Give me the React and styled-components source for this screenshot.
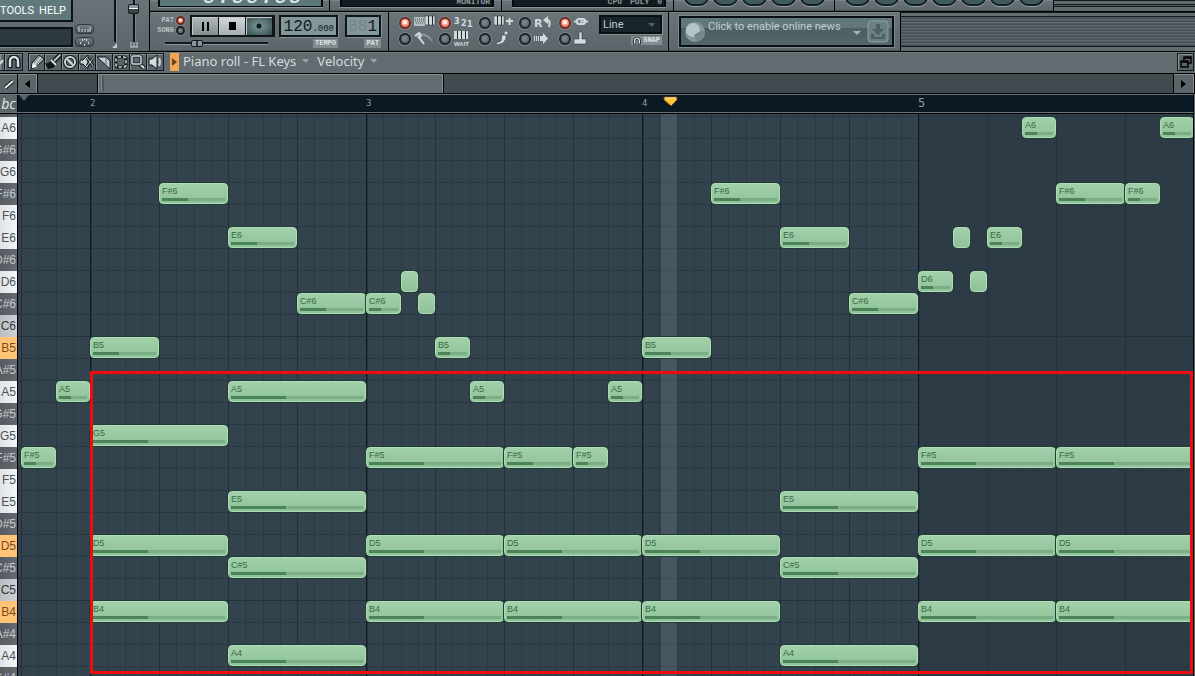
import styled, { createGlobalStyle, css } from 'styled-components'

const GlobalStyle = createGlobalStyle`
  * { box-sizing: border-box; }
  body {
    margin: 0;
    background: #5e686d;
    font-family: "Liberation Sans", Arial, sans-serif;
  }
  button, input, select { margin: 0; padding: 0; font: inherit; }
  button { border: 0; background: none; color: inherit; }
`

const STEP = 17.25
const ROW = 22
const GRID_START = 72

const Window = styled.div`
  display: flex;
  flex-direction: column;
  height: 100vh;
  overflow: hidden;
`

const TopArea = styled.header`
  display: flex;
  flex: none;
  height: 52px;
  border-bottom: 1px solid #000;
`

const stripes = css`
  background: repeating-linear-gradient(#606a6e 0 1px, #505a5e 1px 2px, #454f53 2px 3px);
`

const MainPanel = styled.div`
  display: flex;
  flex: none;
  width: 150px;
  border-right: 1px solid #000;
  background: linear-gradient(#697378, #5b656a);
`

const MenuColumn = styled.div`
  display: flex;
  flex-direction: column;
  gap: 5px;
  width: 73px;
`

const Menu = styled.nav`
  display: flex;
  justify-content: flex-end;
  align-items: center;
  gap: 5px;
  height: 22px;
  padding-right: 5px;
  border: 2px solid #0a1214;
  border-width: 0 2px 2px 0;
  background: #61797a;
`

const MenuItem = styled.a`
  color: #fff;
  font-family: Roboto, sans-serif;
  font-size: 11px;
  text-decoration: none;
`

const HintBar = styled.div`
  height: 20px;
  border: 2px solid #0a1214;
  border-left: 0;
  background: #2c3a3f;
  box-shadow: 0 1px #7d878b;
`

const SideButtons = styled.div`
  display: flex;
  flex-direction: column;
  justify-content: flex-end;
  gap: 3px;
  padding: 0 2px 4px;
`

const PillButton = styled.button`
  display: flex;
  align-items: center;
  justify-content: center;
  width: 19px;
  height: 10px;
  border: 1px solid #30393d;
  border-radius: 4px;
  background: linear-gradient(#758085, #434d52);
`

const Faders = styled.div`
  display: flex;
  gap: 8px;
  padding-left: 13px;
`

const FaderSlot = styled.div`
  display: flex;
  flex-direction: column;
  align-items: center;
  width: 11px;
`

const Fader = styled.input`
  appearance: none;
  writing-mode: vertical-lr;
  direction: rtl;
  width: 11px;
  height: 42px;
  background: linear-gradient(90deg, transparent 5px, #0c1316 5px 7px, #78848a 7px 8px, transparent 8px);
  &::-webkit-slider-thumb {
    appearance: none;
    width: 11px;
    height: 10px;
    border: 1px solid #161d20;
    border-radius: 2px;
    background: linear-gradient(#8c959a 35%, #fff 35% 50%, #3c4549 50%);
    visibility: ${({ $hidden }) => ($hidden ? 'hidden' : 'visible')};
  }
`

const Racks = styled.div`
  display: flex;
  flex: 1;
  flex-direction: column;
  min-width: 0;
`

const Rack = styled.div`
  display: flex;
  height: ${({ $h }) => $h}px;
  overflow: hidden;
  ${({ $line }) => $line && 'border-bottom: 1px solid #000;'}
`

const Panel = styled.section`
  display: flex;
  flex: none;
  align-items: flex-start;
  width: ${({ $w }) => $w}px;
  padding: ${({ $pad }) => $pad};
  border-right: 1px solid #000;
  background: linear-gradient(#697378, #5b656a);
  box-shadow: inset 0 1px #7b8589, inset 0 -1px #495357;
`

const EmptyRack = styled.div`
  flex: 1;
  ${stripes}
  border-top: 1px solid #14191b;
  box-shadow: inset 0 3px #626c70, inset 0 4px #14191b, inset 0 -4px #626c70, inset 0 -5px #14191b;
`

const CutDisplay = styled.div`
  display: flex;
  justify-content: flex-end;
  align-items: flex-end;
  gap: 8px;
  width: 100%;
  height: 7px;
  overflow: hidden;
  padding-right: ${({ $lcd }) => ($lcd ? 18 : 2)}px;
  border: 1px solid #050a0c;
  border-width: 0 2px 1px;
  background: ${({ $lcd }) => ($lcd ? '#5d7778' : '#111b20')};
  color: ${({ $lcd }) => ($lcd ? '#dfe9e9' : '#8f9a9e')};
  font: ${({ $lcd }) => ($lcd ? 'italic 24px/18px' : 'bold 8px/8px')} "Liberation Mono", monospace;
  box-shadow: 0 1px #8b9599;
`

const RoundButtons = styled.div`
  display: flex;
  align-items: flex-end;
  gap: 4px;
  height: 6px;
`

const RoundButton = styled.button`
  width: 25px;
  height: 20px;
  flex: none;
  border: 2px solid #151f23;
  border-radius: 9px;
  background: #405a5d;
  box-shadow: 0 1px #97a1a5;
`

const ModeSwitch = styled.fieldset`
  display: flex;
  flex-direction: column;
  width: 28px;
  margin: 0;
  padding: 0;
  border: 0;
`

const ModeLabel = styled.label`
  display: flex;
  align-items: center;
  justify-content: flex-end;
  gap: 2px;
  height: 10px;
  color: #bac3c7;
  font: bold 7px/10px "Liberation Mono", monospace;
`

const Led = styled.input`
  appearance: none;
  flex: none;
  width: ${({ $size }) => $size}px;
  height: ${({ $size }) => $size}px;
  border: 2px solid #1b2326;
  border-radius: 50%;
  background: radial-gradient(circle at 45% 40%, #7d878b, #565f63);
  box-shadow: 0 0 0 1px #79848a;
  &:checked {
    background: radial-gradient(circle at 50% 40%, #fff 15%, #ff8a78 55%, #e85844);
    border-color: #712920;
  }
`

const TransportButtons = styled.div`
  display: flex;
  margin-left: 5px;
  border: 2px solid #101618;
  background: #101618;
  gap: 1px;
`

const TransportButton = styled.button`
  display: flex;
  align-items: center;
  justify-content: center;
  width: 26px;
  height: 18px;
  background: ${({ $tone }) => $tone};
  box-shadow: inset 1px 1px #c2cacd;
`

const TransportGroup = styled.div`
  display: grid;
  grid-template-columns: 28px 90px;
  row-gap: 1px;
`

const Position = styled.input`
  appearance: none;
  grid-column: 1 / 3;
  width: 103px;
  height: 10px;
  margin-left: 8px;
  background: linear-gradient(transparent 4px, #11191c 4px 6px, #8a959a 6px 7px, transparent 7px);
  &::-webkit-slider-thumb {
    appearance: none;
    width: 12px;
    height: 7px;
    border: 1px solid #161d20;
    border-radius: 2px;
    background: linear-gradient(90deg, #8a959a 40%, #2c3438 40% 60%, #8a959a 60%);
  }
`

const Readout = styled.div`
  display: flex;
  flex-direction: column;
  align-items: flex-end;
  gap: 2px;
  width: ${({ $w }) => $w}px;
  margin-left: ${({ $gap }) => $gap}px;
`

const Lcd = styled.output`
  display: flex;
  align-items: baseline;
  justify-content: flex-end;
  width: 100%;
  height: 22px;
  padding-right: 2px;
  border: 2px solid #0e1517;
  background: #83979a;
  box-shadow: 1px 1px #879195;
  color: #10191c;
  font: 16px/20px "Liberation Mono", monospace;
  small { font-size: 9px; }
  s { color: #74888b; text-decoration: none; }
`

const Tag = styled.span`
  display: flex;
  align-items: center;
  gap: 2px;
  height: 9px;
  padding: 0 2px;
  background: #818b90;
  color: #dde3e5;
  font: bold 7px/9px "Liberation Mono", monospace;
`

const Options = styled.div`
  display: grid;
  grid-template-columns: repeat(5, 40px);
  grid-auto-rows: 16px;
`

const Option = styled.label`
  display: flex;
  align-items: center;
  gap: 3px;
`

const SnapGroup = styled.div`
  display: flex;
  flex-direction: column;
  align-items: flex-end;
  gap: 2px;
  margin-left: auto;
`

const SelectWrap = styled.div`
  display: grid;
  grid-template-columns: 1fr 12px;
  align-items: center;
  width: 63px;
  height: 19px;
  border: 2px solid #0a1012;
  background: #17242a;
  box-shadow: 1px 1px #879195;
  svg { grid-area: 1 / 2; pointer-events: none; }
`

const SnapSelect = styled.select`
  appearance: none;
  grid-area: 1 / 1 / 2 / 3;
  width: 100%;
  padding-left: 2px;
  border: 0;
  background: none;
  color: #c3cbce;
  font: 11px/14px Roboto, sans-serif;
`

const News = styled.button`
  display: flex;
  align-items: flex-start;
  gap: 2px;
  width: 215px;
  height: 31px;
  padding: 2px 3px 0 4px;
  border: 2px solid #0a1012;
  background: linear-gradient(#62777a 0 10px, #4b5f62 10px, #526769);
  box-shadow: 0 0 0 1px #7d898d;
  color: #c0cfd1;
  font: 11px/14px Roboto, sans-serif;
  span { flex: 1; text-align: left; white-space: nowrap; }
`

const TitleBar = styled.div`
  display: flex;
  flex: none;
  align-items: flex-start;
  height: 22px;
  padding: 1px 1px 0 0;
  border-bottom: 1px solid #000;
  background: #616b70;
  box-shadow: inset 0 1px #737d81;
  color: #d5dcdf;
  font: 13px/16px "Noto Sans", "Open Sans", sans-serif;
  white-space: nowrap;
`

const ToolGroup = styled.div`
  display: flex;
  margin-right: ${({ $after }) => $after}px;
`

const Tool = styled.button`
  display: flex;
  align-items: center;
  justify-content: center;
  width: ${({ $w }) => $w || 17}px;
  height: 18px;
  overflow: hidden;
  border: 1px solid #11181b;
  border-left-width: ${({ $joined }) => ($joined ? 0 : 1)}px;
  background: #596368;
  box-shadow: inset 1px 1px #879196;
`

const PlayMark = styled.button`
  display: flex;
  align-items: center;
  justify-content: center;
  width: 9px;
  height: 18px;
  margin-right: 4px;
  background: #f2a650;
`

const TitleItem = styled.button`
  display: flex;
  align-items: center;
  gap: 6px;
  margin-right: 8px;
`

const Spring = styled.div`
  flex: 1;
`

const ScrollRow = styled.div`
  display: flex;
  flex: none;
  height: 20px;
  padding-right: 1px;
  border-bottom: 1px solid #000;
  background: #404a4f;
`

const ScrollButton = styled.button`
  display: flex;
  align-items: center;
  justify-content: center;
  width: ${({ $w }) => $w}px;
  border: 1px solid #859095;
  border-width: 1px 1px 0 0;
  outline: 1px solid #000;
  background: #5b656a;
`

const ScrollTrack = styled.div`
  flex: 1;
  padding-left: 60px;
`

const ScrollThumb = styled.div`
  width: 347px;
  height: 19px;
  padding: 2px 3px;
  border: 1px solid #000;
  border-width: 0 1px;
  background: #616b70;
  box-shadow: inset 1px 1px #858f94, inset -1px 0 #858f94;
  &::before {
    content: '';
    display: block;
    width: 2px;
    height: 15px;
    border-left: 1px solid #7f898e;
    background: #4d575b;
  }
`

const RulerRow = styled.div`
  display: flex;
  flex: none;
  height: 19px;
  margin-right: 1px;
  border: 1px solid #67727a;
  border-width: 1px 0;
  border-right: 1px solid #000;
  background: #0a1924;
  box-shadow: 0 1px #000;
`

const Abc = styled.button`
  width: 18px;
  border-right: 1px solid #000;
  background: #5b656a;
  color: #e4e9eb;
  direction: rtl;
  overflow: hidden;
  font: italic 14px/17px "Open Sans", sans-serif;
`

const Ruler = styled.div`
  position: relative;
  display: flex;
  flex: 1;
  overflow: hidden;
  padding-left: 72px;
`

const RulerCorner = styled.svg`
  position: absolute;
  top: 0;
  left: 1px;
`

const BarNumber = styled.span`
  flex: none;
  width: 276px;
  color: #8e9aa2;
  font: ${({ $big }) => ($big ? '12px' : '9px')}/17px "DejaVu Sans Mono", monospace;
`

const Playhead = styled.svg`
  position: absolute;
  top: 1px;
  left: 645px;
`

const Roll = styled.main`
  display: flex;
  flex: 1;
  min-height: 0;
  margin: 1px 1px 0 0;
  border-right: 1px solid #000;
  overflow: hidden;
`

const Keyboard = styled.div`
  flex: none;
  width: 18px;
  overflow: hidden;
  border-right: 1px solid #000;
`

const keyColors = {
  white: 'background: linear-gradient(90deg, #dfe3e8, #f3f5f8); color: #4c5358;',
  black: 'background: linear-gradient(90deg, #545b61, #656b70); color: #c4cbd0;',
  root: 'background: linear-gradient(90deg, #b9bec4, #cdd1d6); color: #32383c;',
  lit: 'background: #ffc478; color: #7b4c1c;',
}

const Key = styled.div`
  display: flex;
  align-items: center;
  justify-content: flex-end;
  height: ${({ $short }) => ($short ? 3 : 22)}px;
  padding-right: 1px;
  overflow: hidden;
  ${({ $kind }) => keyColors[$kind]}
  font-size: 12px;
  line-height: 22px;
`

const Canvas = styled.div`
  position: relative;
  flex: 1;
  overflow: hidden;
  background:
    linear-gradient(90deg, #0f1c24 1px, #24333c 1px 2px, transparent 2px) 72px 0 / 276px 100%,
    linear-gradient(#22303a 1px, transparent 1px) 0 222px / 100% 264px,
    linear-gradient(90deg, #21303a 1px, transparent 1px) 3px 0 / 69px 100%,
    linear-gradient(90deg, transparent 17px, #2a3943 17px 18px, transparent 18px 35px,
      #2a3943 35px 36px, transparent 36px 52px, #2a3943 52px 53px, transparent 53px) 3px 0 / 69px 100%,
    linear-gradient(#293842 1px, transparent 1px) 0 2px / 100% 22px,
    linear-gradient(90deg, #33434d 900px, #2d3b46 900px);
`

const PlayColumn = styled.div`
  position: absolute;
  top: 0;
  bottom: 0;
  left: 643px;
  width: 16px;
  background: rgba(150, 170, 180, 0.2);
`

const Note = styled.div`
  position: absolute;
  height: 21px;
  padding: 3px 2px 0;
  overflow: hidden;
  border: 1px solid #aedcb5;
  border-radius: 4px;
  background: linear-gradient(#a2d0aa, #8fc299);
  box-shadow: 0 0 0 1px #243c38;
  color: #356b43;
  font-size: 9px;
  line-height: 8px;
`

const Velocity = styled.div`
  height: 3px;
  margin-top: 3px;
  background: linear-gradient(90deg, #4b8458 42%, #7bae86 42%);
`

const Selection = styled.div`
  position: absolute;
  top: 257px;
  right: 0;
  left: 72px;
  height: 303px;
  border: 3px solid #ee0c0c;
`

const names = ['B', 'A#', 'A', 'G#', 'G', 'F#', 'F', 'E', 'D#', 'D', 'C#', 'C']
const litKeys = ['B5', 'D5', 'B4']
const keys = [6, 5, 4].flatMap((o) => names.map((n) => n + o)).slice(1, 28)

const kindOf = (key) => {
  if (litKeys.includes(key)) return 'lit'
  if (key.includes('#')) return 'black'
  return key[0] === 'C' ? 'root' : 'white'
}

// [key, first step counted from bar 2, length in steps]
const notes = [
  ['F#5', -4, 2], ['A5', -2, 2], ['B5', 0, 4], ['F#6', 4, 4], ['E6', 8, 4],
  ['C#6', 12, 4], ['C#6', 16, 2], ['D6', 18, 1], ['C#6', 19, 1], ['B5', 20, 2],
  ['A5', 22, 2], ['A5', 30, 2], ['B5', 32, 4], ['F#6', 36, 4], ['E6', 40, 4],
  ['C#6', 44, 4], ['D6', 48, 2], ['E6', 50, 1], ['D6', 51, 1], ['E6', 52, 2],
  ['A6', 54, 2], ['F#6', 56, 4], ['F#6', 60, 2], ['A6', 62, 2],
  ['G5', 0, 8], ['D5', 0, 8], ['B4', 0, 8],
  ['A5', 8, 8], ['E5', 8, 8], ['C#5', 8, 8], ['A4', 8, 8],
  ['F#5', 16, 8], ['D5', 16, 8], ['B4', 16, 8],
  ['F#5', 24, 4], ['F#5', 28, 2], ['D5', 24, 8], ['B4', 24, 8],
  ['D5', 32, 8], ['B4', 32, 8], ['E5', 40, 8], ['C#5', 40, 8], ['A4', 40, 8],
  ['F#5', 48, 8], ['D5', 48, 8], ['B4', 48, 8],
  ['F#5', 56, 8], ['D5', 56, 8], ['B4', 56, 8],
]

const placeNote = (key, start, length) => {
  const left = Math.round(GRID_START + start * STEP)
  const right = Math.round(GRID_START + (start + length) * STEP)
  return {
    left,
    width: right - left,
    top: 3 + (keys.indexOf(key) - 1) * ROW,
  }
}

const toolIcons = [
  ['Draw', <><path d="M2 15l1-6 7-8 5 4-8 8z" fill="#c3cbcf" stroke="#11181b" /><path d="M3 14l1-5 4 4z" fill="#fff" /><path d="M5 9l6-7M7 11l6-7" stroke="#707b80" /></>],
  ['Paint', <><path d="M9 7l6-6" stroke="#11181b" strokeWidth="5" /><path d="M9 7l6-6" stroke="#bdc5c9" strokeWidth="2" /><path d="M0 9q4 1 7-4l5 5-4 4-5 1z" fill="#11181b" /><path d="M6 6l5 5" stroke="#d6dddf" strokeWidth="2" /></>],
  ['Delete', <><circle cx="8" cy="8" r="5" fill="none" stroke="#11181b" strokeWidth="4" /><circle cx="8" cy="8" r="5" fill="none" stroke="#d1d8db" strokeWidth="2" /><path d="M5 5l6 6" stroke="#d1d8db" strokeWidth="2" /></>],
  ['Mute', <><path d="M1 6h3l5-5v14l-5-5H1z" fill="#cbd2d5" stroke="#11181b" /><path d="M8 4l6 8M14 4l-6 8" stroke="#11181b" strokeWidth="3" /><path d="M8 4l6 8M14 4l-6 8" stroke="#d7dddf" /></>],
  ['Slice', <><path d="M1 3h9l4 4v8z" fill="#c6ced2" stroke="#11181b" /><path d="M10 3v10" stroke="#596368" /></>],
  ['Select', <><rect x="3" y="3" width="10" height="10" rx="2" fill="none" stroke="#11181b" strokeWidth="3" /><rect x="3" y="3" width="10" height="10" rx="2" fill="none" stroke="#d5dcdf" strokeWidth="1.5" strokeDasharray="3 2" /></>],
  ['Zoom', <><path d="M9 9l5 5" stroke="#11181b" strokeWidth="4" /><path d="M9 9l5 5" stroke="#dce2e4" strokeWidth="2" /><rect x="2" y="2" width="9" height="8" rx="1" fill="#59656a" stroke="#11181b" strokeWidth="3" /><rect x="2" y="2" width="9" height="8" rx="1" fill="none" stroke="#d5dcdf" strokeWidth="1.5" /></>],
  ['Playback', <><path d="M2 5h3l5-4v14l-5-4H2z" fill="#d5dcdf" stroke="#11181b" /><path d="M12 4q2 4 0 8" fill="none" stroke="#cbd2d5" strokeWidth="2" /></>],
]

const light = '#d3dadd'
const piano = <path d="M0 0h10v9H0z" fill={light} stroke="#20292d" strokeWidth=".5" />
const pianoGaps = <path d="M3.5 0v9M7.5 0v9" stroke="#20292d" />

const options = [
  ['Typing keyboard', true, <><rect x="0" y="2" width="11" height="9" fill="#b4bdc1" /><path d="M1 4h9M1 6h9M2 8h7" stroke="#465054" strokeDasharray="1 1" /><g transform="translate(11 1)">{piano}{pianoGaps}</g></>],
  ['Countdown', true, <text fill={light} fontFamily="DejaVu Sans" fontWeight="bold" fontSize="8"><tspan x="0" y="9">3</tspan><tspan x="7" y="11">2</tspan><tspan x="13" y="12">1</tspan></text>],
  ['Blend notes', false, <><g transform="translate(0 1)">{piano}{pianoGaps}</g><path d="M12 6h7M15.5 3v7" stroke={light} strokeWidth="2" /></>],
  ['Loop record', false, <><text x="0" y="12" fill={light} fontFamily="DejaVu Sans" fontWeight="bold" fontSize="11">R</text><path d="M14 1v8L9 5z" fill={light} /><path d="M13 5q4 0 2 7" fill="none" stroke={light} strokeWidth="2" /></>],
  ['Link', true, <><rect x="3" y="4" width="8" height="5" rx="2" fill="none" stroke={light} strokeWidth="2" /><path d="M0 6.5h4M6 6.5h8" stroke={light} strokeWidth="2" /></>],
  ['Metronome', false, <><path d="M1 6q2-4 6-4 10 1 12 10-5-7-12-8z" fill="#8b969b" /><path d="M1 5l4-3 2 3-3 2M4 5l6 8" fill="none" stroke={light} strokeWidth="2" /></>],
  ['Wait for input', false, <><rect width="14" height="8" fill={light} /><path d="M3.5 0v8M7.5 0v8M11.5 0v8" stroke="#20292d" /><text x="0" y="15" fill={light} fontFamily="Liberation Sans" fontWeight="bold" fontSize="6">WAIT</text></>],
  ['Step edit', false, <><path d="M2 12l5-2 1-6h4v4l-3 4-6 2z" fill={light} stroke="#20292d" strokeWidth=".5" /><circle cx="12" cy="2" r="1.5" fill={light} /></>],
  ['Auto scroll', false, <><path d="M.5 5v5M2.5 5v5M4.5 5v5" stroke={light} /><path d="M6 5h3V2l5 5.5L9 13v-3H6z" fill={light} /></>],
  ['Multilink', false, <path d="M5 1h3v7h4v5H0V8h5z" fill={light} stroke="#20292d" strokeWidth=".5" />],
]

const Down = ({ color = '#9aa5aa' }) => (
  <svg width="7" height="4"><path d="M0 0h7L4 4z" fill={color} /></svg>
)

const Magnet = ({ size = 14 }) => (
  <svg width={size} height={size} viewBox="0 0 14 14">
    <path d="M3 13V6a4 4 0 018 0v7" fill="none" stroke="#11181b" strokeWidth="5" />
    <path d="M3 12V6a4 4 0 018 0v6" fill="none" stroke="#d7dde0" strokeWidth="2.5" />
  </svg>
)

function TopBar() {
  return (
    <TopArea>
      <MainPanel>
        <MenuColumn>
          <Menu>
            <MenuItem href="#tools">TOOLS</MenuItem>
            <MenuItem href="#help">HELP</MenuItem>
          </Menu>
          <HintBar />
        </MenuColumn>
        <SideButtons>
          <PillButton aria-label="Keyboard">
            <svg width="13" height="5"><path d="M1 0v5M4 2v3M7 2v3M10 2v3M12 0v5" stroke="#d3dadd" /></svg>
          </PillButton>
          <PillButton aria-label="MIDI">
            <svg width="9" height="7"><path d="M0 4h1M2 1h1M4 0h1M6 1h1M8 4h1M4 6h1" stroke="#d3dadd" strokeWidth="2" /></svg>
          </PillButton>
        </SideButtons>
        <Faders>
          <FaderSlot>
            <Fader type="range" aria-label="Volume" $hidden />
            <svg width="6" height="6"><path d="M5 1v5H0z" fill="#c2cace" /></svg>
          </FaderSlot>
          <FaderSlot>
            <Fader type="range" aria-label="Pitch" defaultValue="86" />
            <svg width="8" height="6"><path d="M1 0v5M4 0v5M7 0v5M0 5h8" stroke="#c2cace" /></svg>
          </FaderSlot>
        </Faders>
      </MainPanel>
      <Racks>
        <Rack $h={12} $line>
          <Panel $w={180} $pad="0 6px 0 8px"><CutDisplay $lcd>0:00:99</CutDisplay></Panel>
          <Panel $w={172} $pad="0 7px 0 10px"><CutDisplay>MONITOR</CutDisplay></Panel>
          <Panel $w={172} $pad="0 7px 0 10px"><CutDisplay><span>CPU</span><span>POLY</span><span>0</span></CutDisplay></Panel>
          <Panel $w={161} $pad="0 10px">
            <RoundButtons>{[1, 2, 3, 4, 5].map((n) => <RoundButton key={n} aria-label={`Window ${n}`} />)}</RoundButtons>
          </Panel>
          <Panel $w={219} $pad="0 10px">
            <RoundButtons>{[1, 2, 3, 4, 5, 6, 7].map((n) => <RoundButton key={n} aria-label={`Shortcut ${n}`} />)}</RoundButtons>
          </Panel>
          <EmptyRack />
        </Rack>
        <Rack $h={39}>
          <Panel $w={239} $pad="3px 7px">
            <TransportGroup>
              <ModeSwitch>
                <ModeLabel>PAT<Led type="radio" name="mode" $size={9} defaultChecked /></ModeLabel>
                <ModeLabel>SONG<Led type="radio" name="mode" $size={9} /></ModeLabel>
              </ModeSwitch>
              <TransportButtons>
                <TransportButton $tone="linear-gradient(#b1b8bb, #858e92)" aria-label="Pause">
                  <svg width="7" height="9"><path d="M1 0v9M6 0v9" stroke="#000" strokeWidth="2" /></svg>
                </TransportButton>
                <TransportButton $tone="linear-gradient(#d4d8da, #a7afb2)" aria-label="Stop">
                  <svg width="7" height="8"><path d="M0 0h7v8H0z" /></svg>
                </TransportButton>
                <TransportButton $tone="radial-gradient(#809b9b, #30484a)" aria-label="Record">
                  <svg width="6" height="6"><circle cx="3" cy="3" r="2.5" fill="#0c1719" /></svg>
                </TransportButton>
              </TransportButtons>
              <Position type="range" aria-label="Song position" defaultValue="29" />
            </TransportGroup>
            <Readout $w={59} $gap={4}>
              <Lcd>120<small>.000</small></Lcd>
              <Tag>TEMPO</Tag>
            </Readout>
            <Readout $w={36} $gap={7}>
              <Lcd><s>88</s>1</Lcd>
              <Tag>PAT</Tag>
            </Readout>
          </Panel>
          <Panel $w={280} $pad="3px 7px 3px 10px">
            <Options>
              {options.map(([label, on, icon]) => (
                <Option key={label}>
                  <Led type="checkbox" aria-label={label} $size={12} defaultChecked={on} />
                  <svg width="23" height="16">{icon}</svg>
                </Option>
              ))}
            </Options>
            <SnapGroup>
              <SelectWrap>
                <SnapSelect aria-label="Snap"><option>Line</option></SnapSelect>
                <Down color="#53646b" />
              </SelectWrap>
              <Tag><Magnet size={8} />SNAP</Tag>
            </SnapGroup>
          </Panel>
          <Panel $w={232} $pad="4px 6px 3px 10px">
            <News>
              <svg width="21" height="24">
                <circle cx="10" cy="12" r="10" fill="#82979a" />
                <circle cx="8" cy="10" r="7" fill="#b4c3c5" />
                <path d="M9 15l8-5 3 4-8 8z" fill="#71878a" />
              </svg>
              <span>Click to enable online news</span>
              <svg width="36" height="23">
                <path d="M0 11h8l-4 4z" fill="#a5b5b8" />
                <rect x="15" y="1" width="20" height="21" rx="3" fill="#6c7f82" stroke="#8d9fa2" />
                <path d="M23 4h4v5h4l-6 6-6-6h4zM18 14h3v3h8v-3h3v5H18z" fill="#4c6063" />
              </svg>
            </News>
          </Panel>
          <EmptyRack />
        </Rack>
      </Racks>
    </TopArea>
  )
}

function App() {
  return (
    <Window>
      <GlobalStyle />
      <TopBar />
      <TitleBar>
        <ToolGroup $after={5}>
          <Tool $w={5} $joined aria-label="Options"><svg width="4" height="12"><path d="M0 8l3-4" stroke="#d7dde0" strokeWidth="2" /></svg></Tool>
          <Tool $w={18} $joined aria-label="Snap"><Magnet /></Tool>
        </ToolGroup>
        <ToolGroup $after={6}>
          {toolIcons.map(([label, icon], i) => (
            <Tool key={label} $joined={i > 0} aria-label={label}>
              <svg width="16" height="16">{icon}</svg>
            </Tool>
          ))}
        </ToolGroup>
        <PlayMark aria-label="Play from start"><svg width="5" height="8"><path d="M0 0l5 4-5 4z" fill="#68451f" /></svg></PlayMark>
        <TitleItem>Piano roll - FL Keys <Down /></TitleItem>
        <TitleItem>Velocity <Down /></TitleItem>
        <Spring />
        <Tool aria-label="Restore window">
          <svg width="12" height="12"><path d="M4 4V1h7v6H8M4 2h7M1 5h7v6H1zM1 6h7" fill="none" stroke="#000" strokeWidth="1.5" /></svg>
        </Tool>
      </TitleBar>
      <ScrollRow>
        <ScrollButton $w={18} aria-label="Slide"><svg width="12" height="12"><path d="M2 10l8-7" stroke="#11181b" strokeWidth="4" /><path d="M2 10l8-7" stroke="#e4e9eb" strokeWidth="2" /></svg></ScrollButton>
        <ScrollButton $w={19} aria-label="Scroll left"><svg width="5" height="8"><path d="M5 0v8L0 4z" /></svg></ScrollButton>
        <ScrollTrack><ScrollThumb /></ScrollTrack>
        <ScrollButton $w={20} aria-label="Scroll right"><svg width="5" height="8"><path d="M0 0v8l5-4z" /></svg></ScrollButton>
      </ScrollRow>
      <RulerRow>
        <Abc>bc</Abc>
        <Ruler>
          <RulerCorner width="10" height="6"><path d="M0 0h10L5 6z" fill="#56636b" /></RulerCorner>
          {[2, 3, 4, 5].map((n) => <BarNumber key={n} $big={n === 5}>{n}</BarNumber>)}
          <Playhead width="15" height="11"><path d="M1 1h13v3l-6 6-7-6z" fill="#ffc33c" stroke="#6d4717" /><path d="M2 2h11" stroke="#ffe9a8" /></Playhead>
        </Ruler>
      </RulerRow>
      <Roll>
        <Keyboard>
          {keys.map((key, i) => <Key key={key} $kind={kindOf(key)} $short={i === 0}>{i > 0 && key}</Key>)}
        </Keyboard>
        <Canvas>
          <PlayColumn />
          {notes.map(([key, start, length]) => (
            <Note key={key + start} style={placeNote(key, start, length)}>
              {length > 1 && <>{key}<Velocity /></>}
            </Note>
          ))}
          <Selection />
        </Canvas>
      </Roll>
    </Window>
  )
}

export default App
